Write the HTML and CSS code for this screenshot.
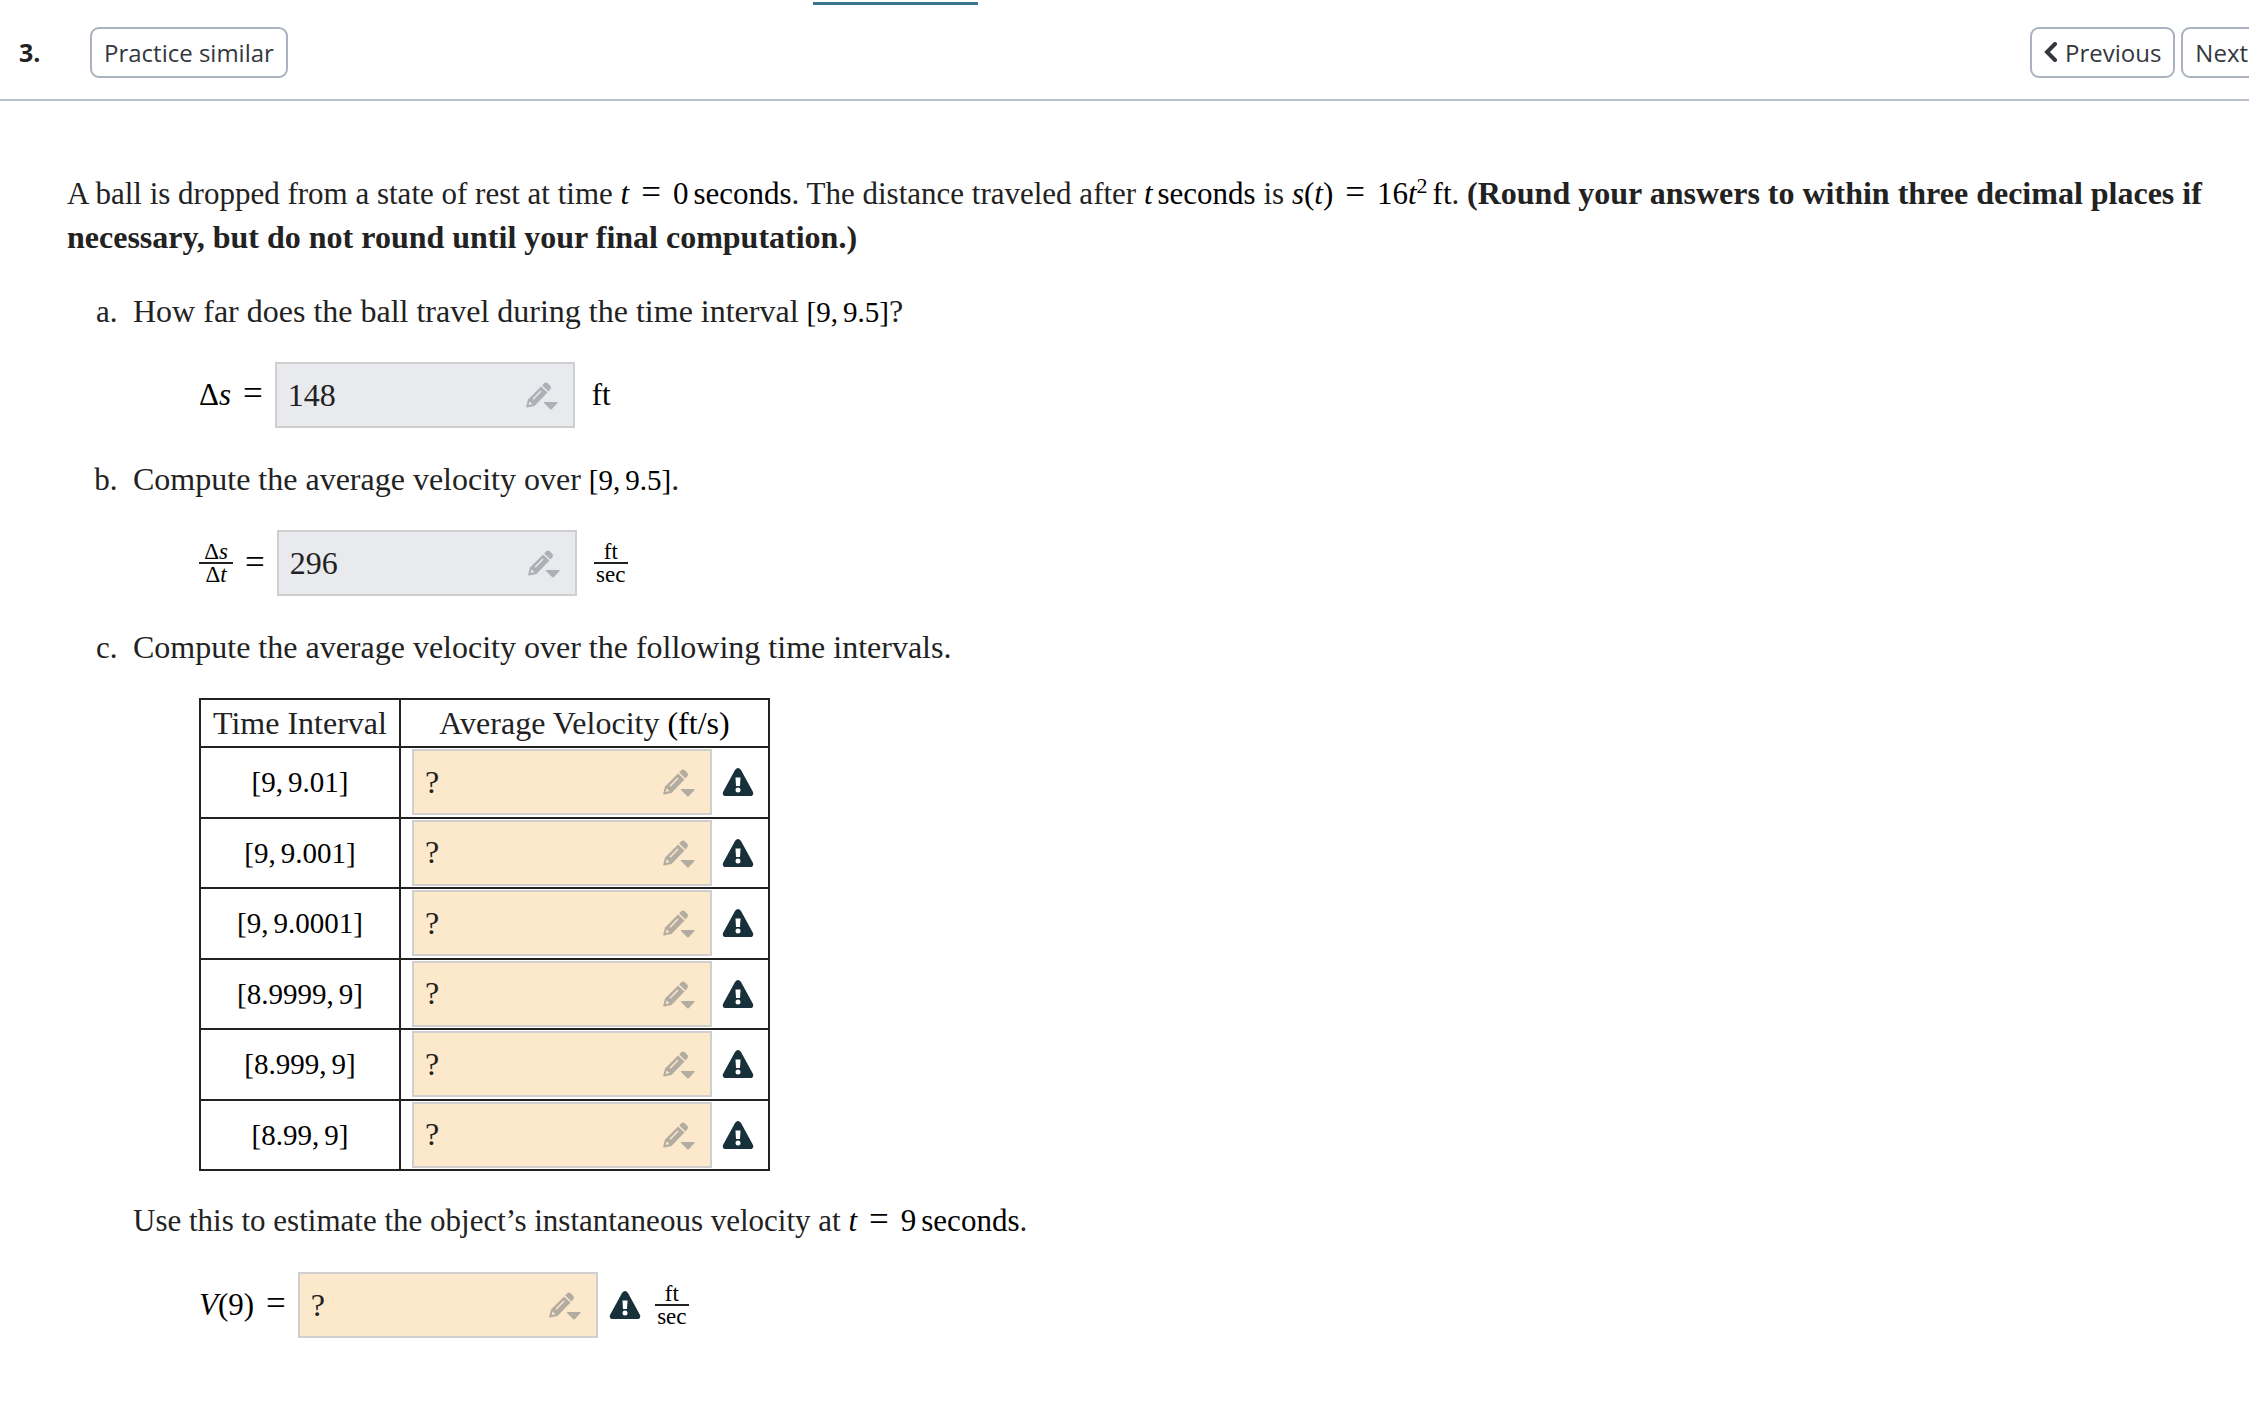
FILE: index.html
```html
<!DOCTYPE html>
<html lang="en">
<head>
    <meta charset="UTF-8">
    <meta name="viewport" content="width=device-width, initial-scale=1.0">
    <title>Question 3</title>
    <link rel="stylesheet" href="styles.css">
</head>
<body>

    <!-- icons used more than once -->
    <svg class="sprite" aria-hidden="true">
        <symbol id="pencil" viewBox="0 0 32 28">
            <path d="M15 4.5 L21.5 10.5 L8.5 24 L1 25.5 Q0 25.5 0.2 24.5 L2 17.5 Z M3.6 19.5 L2.6 23 L6.5 22 Z M14.5 8.5 L6.5 16.7 L7.5 17.7 L15.5 9.5 Z" fill-rule="evenodd"/>
            <path d="M16.2 3.4 L18.5 1 Q20 0 21.5 1 L24.5 4 Q25.5 6 24.5 7 L22.5 9.4 Z"/>
            <path d="M18.5 20 H31 Q32 20 31.5 21 L26 27 Q25 28 24 27 L18 21 Q17.5 20 18.5 20 Z"/>
        </symbol>
        <symbol id="warning" viewBox="0 0 32 28">
            <path d="M13 2 Q16 -2 19 2 L31 24 Q32 28 28 28 H4 Q0 28 1 24 Z"/>
            <path class="mark" d="M13.5 9.5 H18.5 L18 18 H14 Z"/>
            <circle class="mark" cx="16" cy="22" r="2.5"/>
        </symbol>
    </svg>

    <div class="tabs"><div class="tab-active"></div></div>

    <header class="toolbar">
        <span class="number">3.</span>
        <button class="btn">Practice similar</button>
        <nav class="pager">
            <button class="btn">
                <svg class="chevron" viewBox="0 0 14 20"><path d="M11 2 L3 10 L11 18"/></svg>Previous
            </button>
            <button class="btn">Next
                <svg class="chevron next" viewBox="0 0 14 20"><path d="M3 2 L11 10 L3 18"/></svg>
            </button>
        </nav>
    </header>

    <main class="question">
        <p>A ball is dropped from a state of rest at time <span class="math"><i>t</i><span class="eq">=</span>0<span class="unit">seconds</span></span>. The distance traveled after <span class="math"><i>t</i><span class="unit">seconds</span></span> is <span class="math"><i>s</i>(<i>t</i>)<span class="eq">=</span>16<i>t</i><sup>2</sup><span class="unit">ft</span></span>. <b>(Round your answers to within three decimal places if necessary, but do not round until your final computation.)</b></p>

        <ol class="parts">
            <li>
                <p class="prompt">How far does the ball travel during the time interval <span class="math interval">[9,<span class="unit">9.5]</span></span>?</p>
                <div class="answer-row">
                    <label class="math" for="ans-a">Δ<i>s</i><span class="eq">=</span></label>
                    <div class="answer done">
                        <input type="text" id="ans-a" value="148">
                        <button class="pad" aria-label="Open keypad"><svg><use href="#pencil"/></svg></button>
                    </div>
                    <span class="math after">ft</span>
                </div>
            </li>
            <li>
                <p class="prompt">Compute the average velocity over <span class="math interval">[9,<span class="unit">9.5]</span></span>.</p>
                <div class="answer-row">
                    <label class="math with-frac" for="ans-b"><span class="frac"><span>Δ<i>s</i></span><span>Δ<i>t</i></span></span><span class="eq">=</span></label>
                    <div class="answer done">
                        <input type="text" id="ans-b" value="296">
                        <button class="pad" aria-label="Open keypad"><svg><use href="#pencil"/></svg></button>
                    </div>
                    <span class="frac after"><span>ft</span><span>sec</span></span>
                </div>
            </li>
            <li>
                <p class="prompt">Compute the average velocity over the following time intervals.</p>
                <table>
                    <thead>
                        <tr><th>Time Interval</th><th>Average Velocity <span class="math">(ft/s)</span></th></tr>
                    </thead>
                    <tbody>
                        <tr>
                            <td class="math interval"><label for="v1">[9,<span class="unit">9.01]</span></label></td>
                            <td><div class="cell"><div class="answer"><input type="text" id="v1" value="?"><button class="pad" aria-label="Open keypad"><svg><use href="#pencil"/></svg></button></div><svg class="warn"><use href="#warning"/></svg></div></td>
                        </tr>
                        <tr>
                            <td class="math interval"><label for="v2">[9,<span class="unit">9.001]</span></label></td>
                            <td><div class="cell"><div class="answer"><input type="text" id="v2" value="?"><button class="pad" aria-label="Open keypad"><svg><use href="#pencil"/></svg></button></div><svg class="warn"><use href="#warning"/></svg></div></td>
                        </tr>
                        <tr>
                            <td class="math interval"><label for="v3">[9,<span class="unit">9.0001]</span></label></td>
                            <td><div class="cell"><div class="answer"><input type="text" id="v3" value="?"><button class="pad" aria-label="Open keypad"><svg><use href="#pencil"/></svg></button></div><svg class="warn"><use href="#warning"/></svg></div></td>
                        </tr>
                        <tr>
                            <td class="math interval"><label for="v4">[8.9999,<span class="unit">9]</span></label></td>
                            <td><div class="cell"><div class="answer"><input type="text" id="v4" value="?"><button class="pad" aria-label="Open keypad"><svg><use href="#pencil"/></svg></button></div><svg class="warn"><use href="#warning"/></svg></div></td>
                        </tr>
                        <tr>
                            <td class="math interval"><label for="v5">[8.999,<span class="unit">9]</span></label></td>
                            <td><div class="cell"><div class="answer"><input type="text" id="v5" value="?"><button class="pad" aria-label="Open keypad"><svg><use href="#pencil"/></svg></button></div><svg class="warn"><use href="#warning"/></svg></div></td>
                        </tr>
                        <tr>
                            <td class="math interval"><label for="v6">[8.99,<span class="unit">9]</span></label></td>
                            <td><div class="cell"><div class="answer"><input type="text" id="v6" value="?"><button class="pad" aria-label="Open keypad"><svg><use href="#pencil"/></svg></button></div><svg class="warn"><use href="#warning"/></svg></div></td>
                        </tr>
                    </tbody>
                </table>
                <p>Use this to estimate the object’s instantaneous velocity at <span class="math"><i>t</i><span class="eq">=</span>9<span class="unit">seconds</span></span>.</p>
                <div class="answer-row">
                    <label class="math" for="ans-v"><i>V</i>(9)<span class="eq">=</span></label>
                    <div class="answer">
                        <input type="text" id="ans-v" value="?">
                        <button class="pad" aria-label="Open keypad"><svg><use href="#pencil"/></svg></button>
                    </div>
                    <svg class="warn"><use href="#warning"/></svg>
                    <span class="frac after"><span>ft</span><span>sec</span></span>
                </div>
            </li>
        </ol>
    </main>

</body>
</html>
```

FILE: styles.css
```css
* { box-sizing: border-box; }
body { margin: 0; background-color: #fff; color: #222; font-family: "Liberation Serif", serif; font-size: 31px; line-height: 44px; overflow-x: hidden; }
p { margin: 0; }
b, .prompt { font-size: 32px; }
.sprite { display: none; }

.tabs { height: 5px; padding-top: 2px; }
.tab-active { width: 165px; height: 3px; margin-left: 813px; background-color: #3a7590; }

.toolbar { display: flex; align-items: center; height: 96px; padding-left: 19px; border-bottom: 2px solid #b9c0c9; font-family: "Open Sans", sans-serif; overflow: hidden; }
.number { width: 71px; font-size: 25px; font-weight: bold; }
.btn { display: flex; align-items: center; height: 51px; padding: 0 12px; border: 2px solid #a9b2be; border-radius: 9px; background-color: #fff; color: #33383e; font-family: inherit; font-size: 24px; white-space: nowrap; cursor: pointer; }
.pager { display: flex; gap: 6px; margin-left: auto; margin-right: -41px; }
.chevron { width: 14px; height: 20px; margin-right: 7px; fill: none; stroke: #33383e; stroke-width: 4; stroke-linecap: round; }
.chevron.next { margin: 0 0 0 14px; }

.question { padding: 71px 28px 40px 67px; }
.math { color: #000; }
/* keeps the lines of a paragraph evenly spaced */
p .math, p b, sup { line-height: 0; }
.math sup { font-size: 22px; }
.eq { margin: 0 12px; font-size: 35px; line-height: 0; }
.unit { margin-left: 5px; }
.interval { font-size: 29px; }

.parts { margin: 0; padding-left: 66px; list-style-type: lower-alpha; }
.parts li { margin-top: 29px; }
.parts li::marker { content: counter(list-item, lower-alpha) ".\2002"; }
.answer-row { display: flex; align-items: center; margin: 29px 0 0 66px; }
.answer-row label { white-space: nowrap; }
.after { margin-left: 17px; }
.warn + .after { margin-left: 14px; }
.with-frac { display: flex; align-items: center; }
.frac { display: inline-flex; flex-direction: column; width: 34px; font-size: 23px; line-height: 21px; color: #000; text-align: center; }
.frac span:first-child { border-bottom: 2px solid #222; }

.answer { position: relative; width: 300px; height: 66px; }
.answer input { width: 100%; height: 100%; padding: 0 60px 0 11px; border: 2px solid #cfcfcf; background-color: #fce8ca; color: #222; font-family: inherit; font-size: 32px; }
.answer.done input { background-color: #e9eaee; }
.pad { position: absolute; right: 17px; top: 20px; width: 32px; height: 28px; padding: 0; border: none; background: none; cursor: pointer; }
.pad svg { display: block; width: 32px; height: 28px; fill: #b3ada1; }
.done .pad svg { fill: #acb0b7; }
.warn { width: 32px; height: 28px; margin-left: 11px; fill: #17303a; }
.mark { fill: #fff; }

table { height: 473px; margin: 29px 0 28px 66px; border-collapse: collapse; }
th, td { padding: 0 11px; border: 2px solid #222; text-align: center; font-weight: normal; }
th { font-size: 32px; }
th:first-child { width: 200px; }
th:last-child { width: 369px; }
thead tr { height: 48px; }
.cell { display: flex; align-items: center; }
.cell .warn { margin-left: 10px; }
```
